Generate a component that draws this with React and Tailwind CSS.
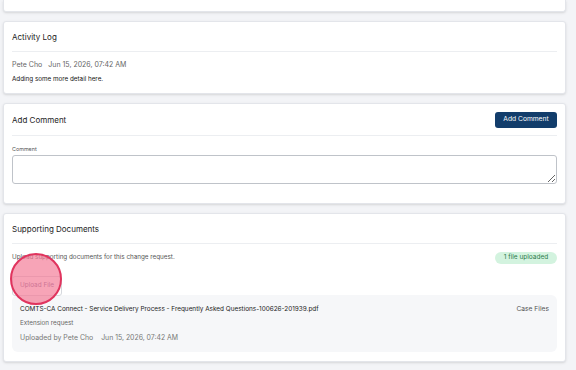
export default function App() {
  return (
    <div
      className="min-h-[370px] w-[576px] bg-[#f3f4f7] pl-[3px] pr-[10px] text-[#222]"
      style={{ fontFamily: "Inter, 'Noto Sans', sans-serif" }}
    >
      {/* Previous card (cut off) */}
      <div className="h-[12px] rounded-b-[3px] border border-t-0 border-[#e3e5ea] bg-white shadow-sm" />

      {/* Activity Log */}
      <div className="mt-[9px] rounded-[3px] border border-[#e3e5ea] bg-white px-[8px] shadow-sm">
        <div className="flex h-[30px] items-center border-b border-[#eceef1] text-[8px]">
          Activity Log
        </div>
        <div className="pt-[8px] pb-[9px]">
          <div className="flex gap-[6px] text-[7px] leading-[10px] text-[#666]">
            <span>Pete Cho</span>
            <span>Jun 15, 2026, 07:42 AM</span>
          </div>
          <div className="mt-[4px] text-[6.3px] leading-[10px] text-[#111]">
            Adding some more detail here.
          </div>
        </div>
      </div>

      {/* Add Comment */}
      <div className="mt-[9px] rounded-[3px] border border-[#e3e5ea] bg-white px-[8px] pb-[19px] shadow-sm">
        <div className="flex h-[32px] items-center justify-between border-b border-[#eceef1]">
          <span className="text-[8px]">Add Comment</span>
          <button className="h-[16px] w-[62px] rounded-[3px] bg-[#123d6b] text-[6.7px] text-white">
            Add Comment
          </button>
        </div>
        <div className="mt-[9px] text-[5.4px] leading-[8px] text-[#555]">Comment</div>
        <textarea className="mt-[2px] block h-[29px] w-full resize-y rounded-[3px] border border-[#bfc3c9] bg-white" />
      </div>

      {/* Supporting Documents */}
      <div className="mt-[9px] rounded-[3px] border border-[#e3e5ea] bg-white px-[8px] pb-[9px] shadow-sm">
        <div className="flex h-[30px] items-center border-b border-[#eceef1] text-[8px]">
          Supporting Documents
        </div>
        <div className="mt-[7px] flex h-[13px] items-center justify-between">
          <span className="text-[6.3px] text-[#555]">
            Upload supporting documents for this change request.
          </span>
          <span className="flex h-[12px] w-[62px] items-center justify-center rounded-full bg-[#d3f3df] text-[6.5px] text-[#2c7a4b]">
            1 file uploaded
          </span>
        </div>
        <div className="relative mt-[5px] h-[20px]">
          <button className="h-[20px] w-[50px] rounded-[3px] border border-[#d5d8dd] bg-white text-[6.4px] text-[#6b5a8a]">
            Upload File
          </button>
          <div className="absolute left-[-2px] top-[-16px] h-[52px] w-[52px] rounded-full border-2 border-[#e0345e] bg-[#f47d98]/70" />
        </div>
        <div className="mt-[6px] rounded-[6px] bg-[#f6f7f9] px-[8px] pt-[9px] pb-[9px]">
          <div className="flex items-center justify-between text-[6.4px] leading-[10px] text-[#222]">
            <span>COMTS-CA Connect - Service Delivery Process - Frequently Asked Questions-100626-201939.pdf</span>
            <span className="text-[6.7px] text-[#555]">Case Files</span>
          </div>
          <div className="mt-[4px] text-[6.3px] leading-[10px] text-[#666]">Extension request</div>
          <div className="mt-[5px] flex gap-[8px] text-[6.9px] leading-[10px] text-[#777]">
            <span>Uploaded by Pete Cho</span>
            <span>Jun 15, 2026, 07:42 AM</span>
          </div>
        </div>
      </div>
    </div>
  );
}
